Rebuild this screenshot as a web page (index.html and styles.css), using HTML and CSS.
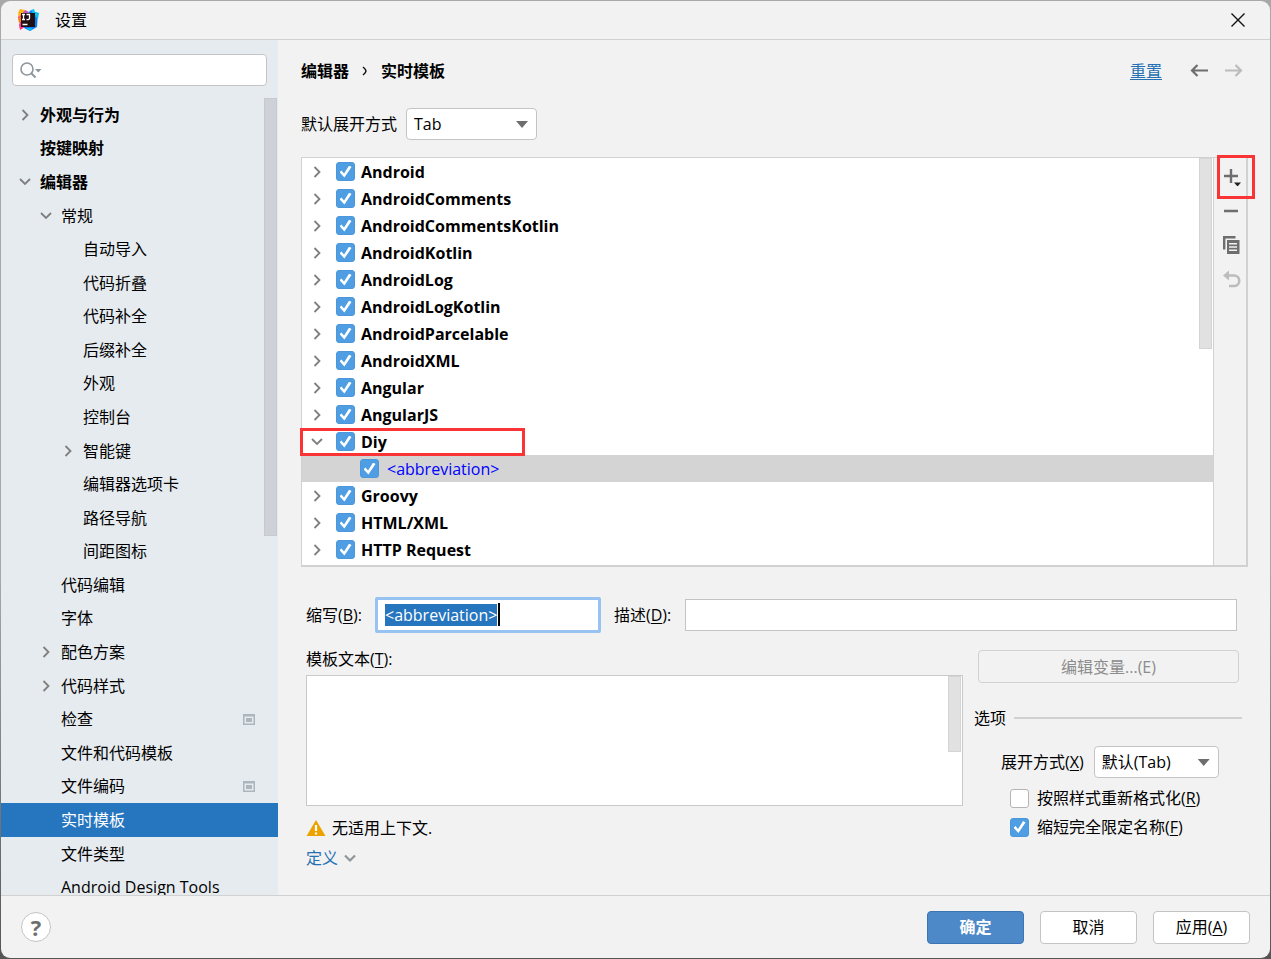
FILE: index.html
```html
<!DOCTYPE html>
<html lang="zh-CN">
<head>
<meta charset="utf-8">
<title>设置</title>
<link rel="stylesheet" href="styles.css">
</head>
<body>
<svg class="defs" width="0" height="0" aria-hidden="true">
  <symbol id="right" viewBox="0 0 12 12"><path d="M3.500 1l5 5-5 5" fill="none" stroke="currentColor" stroke-width="1.800"/></symbol>
  <symbol id="down" viewBox="0 0 12 12"><path d="M1 3l5 5 5-5" fill="none" stroke="currentColor" stroke-width="1.800"/></symbol>
  <symbol id="project" viewBox="0 0 12 11"><path fill="#adb6bd" d="M0 0h12v11H0z"/><path fill="#e6ebef" d="M1.500 2.500h9v7h-9z"/><path fill="#adb6bd" d="M3 4h6v4H3z"/></symbol>
</svg>
<div class="window">
  <header class="titlebar">
    <svg class="logo" width="22" height="22" viewBox="0 0 22 22" aria-hidden="true">
      <path fill="#ff318c" d="M3 1l6 1 4 4-5 12-5 3-1-5 1-3-2-4z"/>
      <path fill="#fdb60d" d="M3 0l5 1-3 4-3 3-1-4z"/>
      <path fill="#fc801d" d="M1 9l4-2v5l-3 2z"/>
      <path fill="#c757bc" d="M8 1l4 2-1 3-5-2z"/>
      <path fill="#087cfa" d="M12 3l2-2 4 2 3 1-1 14-7 4-6-3z"/>
      <path fill="#07c3f2" d="M14 1l3-1 1 3 4 1-1 6-5-5zM9 19h6l-1 3z"/>
      <path fill="#201014" d="M4 4h14v14H4z"/>
      <path fill="none" stroke="#fff" stroke-width="1.300" d="M5 5.500h3M6.500 5.500v4.500M5 10.500h3M9.500 5.500h3v4q0 1.200-3 1M5.500 15.500h5"/>
    </svg>
    <h1 class="title">设置</h1>
    <button class="icon-button" type="button" aria-label="关闭">
      <svg width="14" height="14" viewBox="0 0 14 14"><path d="M.5.5l13 13M13.500.5l-13 13" stroke="#111" stroke-width="1.400"/></svg>
    </button>
  </header>

  <div class="body">
    <aside class="sidebar">
      <div class="search">
        <svg width="22" height="17" viewBox="0 0 22 17" aria-hidden="true"><circle cx="7" cy="7" r="6" fill="none" stroke="#8c969d" stroke-width="1.600"/><path d="M11 11l4.500 4.500" stroke="#8c969d" stroke-width="2"/><path d="M15 7h6.500l-3.200 3.500z" fill="#8c969d"/></svg>
        <input class="search-input" type="text" aria-label="搜索">
      </div>
      <div class="nav-area">
        <ul class="nav">
          <li class="item l0 strong"><svg class="chev"><use href="#right"/></svg>外观与行为</li>
          <li class="item l0 strong"><span class="chev"></span>按键映射</li>
          <li class="item l0 strong"><svg class="chev"><use href="#down"/></svg>编辑器</li>
          <li class="item l1"><svg class="chev"><use href="#down"/></svg>常规</li>
          <li class="item l2"><span class="chev"></span>自动导入</li>
          <li class="item l2"><span class="chev"></span>代码折叠</li>
          <li class="item l2"><span class="chev"></span>代码补全</li>
          <li class="item l2"><span class="chev"></span>后缀补全</li>
          <li class="item l2"><span class="chev"></span>外观</li>
          <li class="item l2"><span class="chev"></span>控制台</li>
          <li class="item l2"><svg class="chev"><use href="#right"/></svg>智能键</li>
          <li class="item l2"><span class="chev"></span>编辑器选项卡</li>
          <li class="item l2"><span class="chev"></span>路径导航</li>
          <li class="item l2"><span class="chev"></span>间距图标</li>
          <li class="item l1"><span class="chev"></span>代码编辑</li>
          <li class="item l1"><span class="chev"></span>字体</li>
          <li class="item l1"><svg class="chev"><use href="#right"/></svg>配色方案</li>
          <li class="item l1"><svg class="chev"><use href="#right"/></svg>代码样式</li>
          <li class="item l1"><span class="chev"></span>检查<svg class="badge"><use href="#project"/></svg></li>
          <li class="item l1"><span class="chev"></span>文件和代码模板</li>
          <li class="item l1"><span class="chev"></span>文件编码<svg class="badge"><use href="#project"/></svg></li>
          <li class="item l1 current"><span class="chev"></span>实时模板</li>
          <li class="item l1"><span class="chev"></span>文件类型</li>
          <li class="item l1"><span class="chev"></span>Android Design Tools</li>
        </ul>
        <div class="nav-thumb"></div>
      </div>
    </aside>

    <main class="content">
      <div class="crumbs">
        <span>编辑器</span>
        <svg width="6" height="10" viewBox="0 0 6 10" aria-hidden="true"><path d="M1 1q3 2.500 3 4T1 9" fill="none" stroke="#111" stroke-width="1.500"/></svg>
        <span>实时模板</span>
        <a class="reset" href="#">重置</a>
        <button class="icon-button" type="button" aria-label="后退"><svg width="18" height="14" viewBox="0 0 18 14"><path d="M18 6.500H2M7.500 1L2 6.500 7.500 12" fill="none" stroke="#6e6e6e" stroke-width="2.200"/></svg></button>
        <button class="icon-button" type="button" aria-label="前进" disabled><svg width="18" height="14" viewBox="0 0 18 14"><path d="M0 6.500h16M10.500 1L16 6.500 10.500 12" fill="none" stroke="#bcbcbc" stroke-width="2.200"/></svg></button>
      </div>

      <div class="expand-row">
        <label for="expand">默认展开方式</label>
        <span class="combo combo-main"><select id="expand"><option>Tab</option></select></span>
      </div>

      <section class="panel">
        <ul class="tree">
          <li class="node"><svg class="chev"><use href="#right"/></svg><label class="node-label"><input class="check" type="checkbox" checked>Android</label></li>
          <li class="node"><svg class="chev"><use href="#right"/></svg><label class="node-label"><input class="check" type="checkbox" checked>AndroidComments</label></li>
          <li class="node"><svg class="chev"><use href="#right"/></svg><label class="node-label"><input class="check" type="checkbox" checked>AndroidCommentsKotlin</label></li>
          <li class="node"><svg class="chev"><use href="#right"/></svg><label class="node-label"><input class="check" type="checkbox" checked>AndroidKotlin</label></li>
          <li class="node"><svg class="chev"><use href="#right"/></svg><label class="node-label"><input class="check" type="checkbox" checked>AndroidLog</label></li>
          <li class="node"><svg class="chev"><use href="#right"/></svg><label class="node-label"><input class="check" type="checkbox" checked>AndroidLogKotlin</label></li>
          <li class="node"><svg class="chev"><use href="#right"/></svg><label class="node-label"><input class="check" type="checkbox" checked>AndroidParcelable</label></li>
          <li class="node"><svg class="chev"><use href="#right"/></svg><label class="node-label"><input class="check" type="checkbox" checked>AndroidXML</label></li>
          <li class="node"><svg class="chev"><use href="#right"/></svg><label class="node-label"><input class="check" type="checkbox" checked>Angular</label></li>
          <li class="node"><svg class="chev"><use href="#right"/></svg><label class="node-label"><input class="check" type="checkbox" checked>AngularJS</label></li>
          <li class="node"><svg class="chev"><use href="#down"/></svg><label class="node-label"><input class="check" type="checkbox" checked>Diy</label></li>
          <li class="node leaf"><label class="node-label"><input class="check" type="checkbox" checked>&lt;abbreviation&gt;</label></li>
          <li class="node"><svg class="chev"><use href="#right"/></svg><label class="node-label"><input class="check" type="checkbox" checked>Groovy</label></li>
          <li class="node"><svg class="chev"><use href="#right"/></svg><label class="node-label"><input class="check" type="checkbox" checked>HTML/XML</label></li>
          <li class="node"><svg class="chev"><use href="#right"/></svg><label class="node-label"><input class="check" type="checkbox" checked>HTTP Request</label></li>
        </ul>
        <div class="tree-thumb"></div>
        <div class="tools">
          <button class="tool" type="button" aria-label="添加"><svg width="18" height="18" viewBox="0 0 18 18"><path d="M8 1v14M1 8h14" stroke="#6e6e6e" stroke-width="2.400"/><path d="M11 14.500h7l-3.500 4z" fill="#222"/></svg></button>
          <button class="tool" type="button" aria-label="移除"><svg width="18" height="18" viewBox="0 0 18 18"><path d="M1 9h14" stroke="#6e6e6e" stroke-width="2.400"/></svg></button>
          <button class="tool" type="button" aria-label="复制"><svg width="18" height="18" viewBox="0 0 18 18"><path d="M1.200 13.500V1.200H12.500" fill="none" stroke="#6e6e6e" stroke-width="2.400"/><path d="M4 4h12.500v14H4z" fill="#6e6e6e"/><path d="M6 7.800h8M6 11h8M6 14.200h8" stroke="#f2f2f2" stroke-width="1.400"/></svg></button>
          <button class="tool" type="button" aria-label="还原" disabled><svg width="18" height="18" viewBox="0 0 18 18"><path d="M5 5.500h6a5 5 0 0 1 0 10.500H6" fill="none" stroke="#bcbcbc" stroke-width="2.600"/><path d="M0 5.500L6 .5v10z" fill="#bcbcbc"/></svg></button>
        </div>
        <div class="mark mark-row"></div>
        <div class="mark mark-add"></div>
      </section>

      <div class="fields">
        <label for="abbr">缩写(<u>B</u>):</label>
        <span class="abbr"><input class="text focus" id="abbr" type="text" value="&lt;abbreviation&gt;"><span class="caret"></span></span>
        <label class="desc-label" for="desc">描述(<u>D</u>):</label>
        <input class="text desc" id="desc" type="text">
      </div>

      <div class="details">
        <section class="left">
          <label for="body">模板文本(<u>T</u>):</label>
          <div class="editor"><textarea id="body"></textarea><div class="editor-thumb"></div></div>
          <p class="warning"><svg width="20" height="18" viewBox="0 0 20 18" aria-hidden="true"><path d="M10 1l9.500 16H.5z" fill="#eda200"/><path d="M10 6v6M10 13.500v2" stroke="#fff" stroke-width="2.200"/></svg>无适用上下文.</p>
          <a class="define" href="#">定义<svg width="12" height="12" viewBox="0 0 12 12" aria-hidden="true"><path d="M1 3.500l5 5 5-5" fill="none" stroke="#8f969b" stroke-width="2.200"/></svg></a>
        </section>
        <section class="right">
          <button class="button variables" type="button" disabled>编辑变量...(E)</button>
          <h2 class="group">选项</h2>
          <div class="option-row">
            <label for="mode">展开方式(<u>X</u>)</label>
            <span class="combo combo-mode"><select id="mode"><option>默认(Tab)</option></select></span>
          </div>
          <label class="option"><input class="check" type="checkbox"><span>按照样式重新格式化(<u>R</u>)</span></label>
          <label class="option"><input class="check" type="checkbox" checked><span>缩短完全限定名称(<u>F</u>)</span></label>
        </section>
      </div>
    </main>
  </div>

  <footer class="footer">
    <button class="help" type="button">?</button>
    <button class="button primary" type="button">确定</button>
    <button class="button" type="button">取消</button>
    <button class="button" type="button"><span>应用(<u>A</u>)</span></button>
  </footer>
</div>
<script src="script.js"></script>
</body>
</html>
```
FILE: styles.css
```css
* { box-sizing: border-box; }

body {
  margin: 0;
  background: linear-gradient(#a8a8a8 60%, #555);
  color: #000;
  font: 16px/22px "Open Sans", "Noto Sans CJK SC", sans-serif;
}

ul, p, h1, h2 { margin: 0; padding: 0; list-style: none; font-size: 16px; font-weight: 400; }

button, input, select, textarea { font: inherit; color: inherit; }

svg { flex: none; }

u { text-underline-offset: 2px; }

.defs { position: absolute; }

.window {
  display: flex;
  flex-direction: column;
  height: calc(100vh - 2px);
  min-height: 800px;
  margin: 1px;
  border-radius: 9px;
  overflow: hidden;
  background: #f2f2f2;
}

.titlebar {
  display: flex;
  align-items: center;
  height: 39px;
  padding: 0 25px 0 16px;
  border-bottom: 1px solid #d1d1d1;
}

.title { flex: 1; margin-left: 16px; }

.icon-button {
  display: flex;
  padding: 0;
  border: 0;
  background: none;
}

.body { display: flex; flex: 1; min-height: 0; }

/* Sidebar */
.sidebar {
  display: flex;
  flex-direction: column;
  gap: 12px;
  width: 277px;
  padding-top: 14px;
  background: #e6ebef;
}

.search {
  display: flex;
  align-items: center;
  gap: 4px;
  height: 32px;
  margin: 0 11px;
  padding: 0 7px;
  border: 1px solid #c4c4c4;
  border-radius: 4px;
  background: #fff;
}

.search-input { flex: 1; min-width: 0; border: 0; outline: 0; background: none; }

.nav-area { position: relative; display: flex; flex: 1; min-height: 0; overflow: hidden; }

.nav { display: flex; flex-direction: column; flex: 1; margin-bottom: -9px; }

.item {
  display: flex;
  align-items: center;
  flex: 1;
  padding-right: 23px;
}

.chev { width: 12px; height: 12px; margin-right: 9px; color: #7f7f7f; }

.l0 { padding-left: 18px; }
.l1 { padding-left: 39px; }
.l2 { padding-left: 61px; }

.strong { font-weight: 700; }

.current { background: #2675bf; color: #fff; }

.badge { width: 12px; height: 11px; margin-left: auto; }

.nav-thumb {
  position: absolute;
  top: 0;
  right: 1px;
  width: 13px;
  height: 55%;
  border: 1px solid #c5cacf;
  background: #ced2d8;
}

/* Main area */
.content {
  display: flex;
  flex-direction: column;
  flex: 1;
  min-width: 0;
  padding: 14px 22px 26px 23px;
}

.crumbs { display: flex; align-items: center; gap: 13px; height: 34px; padding-right: 5px; font-weight: 700; }

.reset { margin: 0 15px 0 auto; color: #2470b3; font-weight: 400; text-underline-offset: 2px; }

.crumbs .icon-button + .icon-button { margin-left: 4px; }

.expand-row { display: flex; align-items: center; gap: 9px; margin: 20px 0 17px; }

.combo { position: relative; display: flex; }

.combo select {
  width: 100%;
  height: 32px;
  padding: 0 7px;
  border: 1px solid #c4c4c4;
  border-radius: 4px;
  background: #fff;
  appearance: none;
}

.combo::after {
  content: "";
  position: absolute;
  top: 13px;
  right: 9px;
  width: 12px;
  height: 7px;
  background: #6e6e6e;
  clip-path: polygon(0 0, 100% 0, 50% 100%);
  pointer-events: none;
}

.combo-main { width: 131px; }
.combo-mode { width: 125px; }

.panel {
  position: relative;
  display: flex;
  flex: 1 1 0;
  min-height: 0;
  border: 1px solid #d1d1d1;
  border-width: 1px 2px 2px 1px;
}

.tree { flex: 1; overflow: hidden; background: #fff; }

.node {
  display: flex;
  align-items: center;
  height: 27px;
  padding-left: 9px;
  font-weight: 700;
}

.node .chev { margin-right: 13px; }

.node-label { display: flex; align-items: center; gap: 6px; }

.leaf { padding-left: 58px; background: #d4d4d4; color: #00f; font-weight: 400; }

.leaf .node-label { gap: 8px; }

.check {
  display: grid;
  place-content: center;
  width: 19px;
  height: 19px;
  margin: 0;
  border: 1px solid #b5b5b5;
  border-radius: 3px;
  background: #fff;
  appearance: none;
}

.check:checked { border-color: #4b97d9; background: #4f9ee3; }

.check:checked::before {
  content: "";
  width: 12px;
  height: 12px;
  background: #fff;
  clip-path: polygon(0 56%, 16% 42%, 38% 66%, 80% 0, 100% 12%, 41% 100%);
}

.tree-thumb {
  position: absolute;
  top: 0;
  right: 34px;
  width: 13px;
  height: 47%;
  border: 1px solid #d4d4d4;
  background: #e1e1e1;
}

.tools {
  display: flex;
  flex-direction: column;
  gap: 16px;
  width: 33px;
  padding: 10px 0 0 9px;
  border-left: 1px solid #d1d1d1;
}

.tool { display: flex; padding: 0; border: 0; background: none; }

.mark { position: absolute; border: 3px solid #fa3434; pointer-events: none; }

.mark-row { top: 270px; left: -2px; width: 225px; height: 28px; }

.mark-add { top: -3px; right: -9px; width: 38px; height: 44px; }

/* Template fields */
.fields { display: flex; align-items: center; margin: 30px 11px 0 5px; }

.abbr { position: relative; margin-left: 13px; }

.text {
  display: block;
  height: 32px;
  padding: 0 7px;
  border: 1px solid #c4c4c4;
  outline: 0;
  background: #fff;
}

.focus {
  width: 226px;
  height: 36px;
  border: 3px solid #97c3f3;
  border-radius: 2px;
}

.focus::selection { background: #2675bf; color: #fff; }

.caret { position: absolute; top: 6px; left: 123px; width: 2px; height: 23px; background: #000; }

.desc-label { margin-left: 13px; }

.desc { flex: 1; min-width: 0; margin-left: 14px; }

.details { display: flex; gap: 11px; margin: 15px 6px 0 5px; }

.left { display: flex; flex-direction: column; flex: 1; }

.editor { position: relative; display: flex; height: 131px; margin: 5px 0 11px; }

.editor textarea { flex: 1; border: 1px solid #c9c9c9; outline: 0; background: #fff; resize: none; }

.editor-thumb {
  position: absolute;
  top: 1px;
  right: 2px;
  width: 13px;
  height: 76px;
  border: 1px solid #d4d4d4;
  background: #e1e1e1;
}

.warning { display: flex; align-items: center; gap: 6px; }

.define {
  display: flex;
  align-items: center;
  align-self: flex-start;
  gap: 6px;
  margin-top: 8px;
  color: #2470b3;
  text-decoration: none;
}

.right { display: flex; flex-direction: column; width: 268px; padding-top: 2px; }

.button {
  width: 97px;
  height: 33px;
  padding: 0;
  border: 1px solid #c4c4c4;
  border-radius: 4px;
  background: #fff;
}

.variables { width: auto; margin: 0 3px 0 4px; border-color: #d1d1d1; background: #f2f2f2; color: #8c8c8c; }

.group { display: flex; align-items: center; gap: 8px; margin: 24px 0 17px; }

.group::after { content: ""; flex: 1; height: 2px; background: #d1d1d1; }

.option-row { display: flex; align-items: center; gap: 10px; margin: 0 0 9px 27px; }

.option { display: flex; align-items: center; gap: 8px; margin: 0 0 7px 36px; }

/* Footer */
.footer {
  display: flex;
  align-items: center;
  gap: 16px;
  height: 63px;
  padding: 0 20px;
  border-top: 1px solid #d1d1d1;
}

.help {
  width: 30px;
  height: 30px;
  margin-right: auto;
  padding: 0;
  border: 1px solid #c4c4c4;
  border-radius: 50%;
  background: #fff;
  color: #6e6e6e;
  font-size: 22px;
  font-weight: 700;
}

.primary { border-color: #3d75b3; background: #4d89c9; color: #fff; font-weight: 700; }
```
FILE: script.js
```js
const abbreviation = document.getElementById("abbr");
abbreviation.focus();
abbreviation.select();
```
